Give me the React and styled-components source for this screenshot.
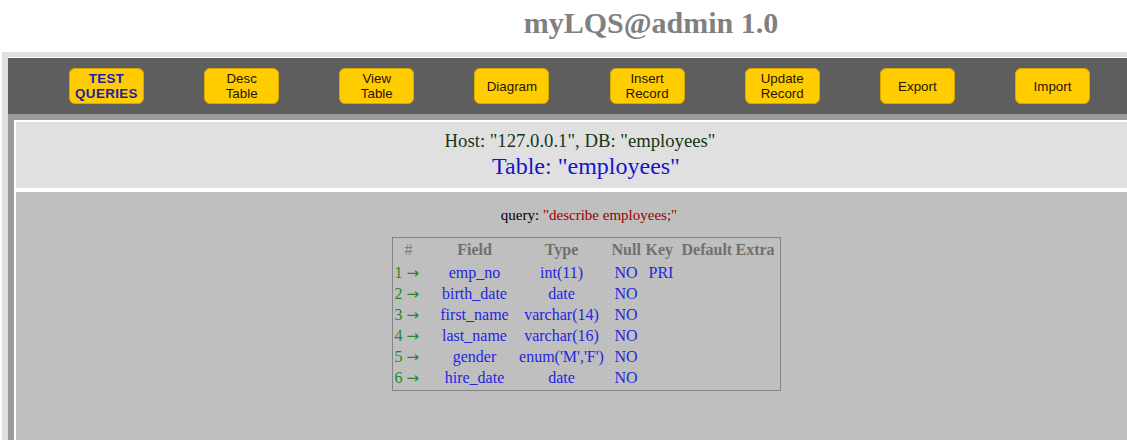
import React from "react";
import styled, { createGlobalStyle } from "styled-components";

const Global = createGlobalStyle`
  html, body { margin: 0; padding: 0; background: #ffffff; overflow: hidden; }
  body { font-family: "Liberation Serif", "Times New Roman", serif; }
  #root { width: 1127px; height: 440px; overflow: hidden; }
`;

const Page = styled.div`
  width: 1302px;
`;

const Header = styled.header`
  height: 52px;
  box-sizing: border-box;
  padding-top: 6px;
  text-align: center;
`;

const Title = styled.h1`
  margin: 0;
  font-family: "Liberation Serif", "Times New Roman", serif;
  font-weight: bold;
  font-size: 30px;
  line-height: 34px;
  color: #808080;
`;

const OuterFrame = styled.div`
  margin-left: 2px;
  padding: 5px 0 0 6px;
  background: #e0e0e0;
`;

const InnerFrame = styled.div`
  border-top: 1px solid #ffffff;
  background: #9a9a9a;
`;

const Toolbar = styled.nav`
  height: 56px;
  box-sizing: border-box;
  background: #5e5e5e;
  display: flex;
  align-items: center;
  gap: 60.15px;
  padding-left: 61px;
`;

const NavButton = styled.button`
  width: 75px;
  height: 36px;
  box-sizing: border-box;
  padding: 0;
  background: #ffcc00;
  border: 1px solid #d9a900;
  border-radius: 6px;
  font-family: "Liberation Sans", Arial, sans-serif;
  font-size: 13.33px;
  line-height: 15px;
  font-weight: ${(p) => (p.$active ? "bold" : "normal")};
  letter-spacing: ${(p) => (p.$active ? "0.4px" : "0")};
  color: ${(p) => (p.$active ? "#1e1eaa" : "#261400")};
  cursor: pointer;
`;

const ContentArea = styled.div`
  padding: 6px 0 0 6px;
`;

const Panel = styled.section`
  border-top: 2px solid #ffffff;
  border-left: 2px solid #ffffff;
  width: 1140px;
`;

const InfoBox = styled.div`
  height: 68px;
  box-sizing: border-box;
  padding-top: 8px;
  background: #e0e0e0;
  border-bottom: 2px solid #ffffff;
  text-align: center;
`;

const HostLine = styled.div`
  font-size: 18.7px;
  line-height: 22px;
  color: #163616;
  padding-right: 12px;
`;

const TableLine = styled.div`
  font-size: 24px;
  line-height: 28px;
  color: #1414cc;
`;

const QueryBox = styled.div`
  border-top: 2px solid #ffffff;
  background: #bfbfbf;
  height: 300px;
  padding-top: 14px;
  box-sizing: border-box;
`;

const QueryLine = styled.div`
  text-align: center;
  font-size: 15px;
  line-height: 18px;
  color: #000000;
  padding-left: 6px;
`;

const QueryText = styled.span`
  color: #990000;
`;

const DescTable = styled.table`
  margin: 13px auto 0;
  border: 1px solid #858585;
  border-collapse: separate;
  border-spacing: 0;
  table-layout: fixed;
  width: 389px;
  padding-bottom: 2px;
  font-size: 16px;
`;

const HeadCell = styled.th`
  height: 24px;
  padding: 0 0 0 ${(p) => p.$pad || 0}px;
  text-align: ${(p) => p.$align};
  font-weight: ${(p) => (p.$plain ? "normal" : "bold")};
  color: ${(p) => (p.$plain ? "#7a7a7a" : "#707070")};
  white-space: nowrap;
  line-height: 24px;
`;

const Cell = styled.td`
  height: 21px;
  padding: 0 0 0 ${(p) => p.$pad || 0}px;
  text-align: ${(p) => p.$align};
  color: ${(p) => (p.$num ? "#238a23" : "#2424e0")};
  white-space: nowrap;
  line-height: 21px;
`;

const Arrow = styled.span`
  font-family: "DejaVu Sans", sans-serif;
  font-size: 15px;
  line-height: 10px;
`;

const columns = [
  { key: "n", label: "#", w: 44, thAlign: "left", thPad: 12, tdAlign: "left", tdPad: 2, plain: true },
  { key: "field", label: "Field", w: 76, thAlign: "center", tdAlign: "center" },
  { key: "type", label: "Type", w: 98, thAlign: "center", tdAlign: "center" },
  { key: "nul", label: "Null", w: 31, thAlign: "left", thPad: 1, tdAlign: "left", tdPad: 4 },
  { key: "k", label: "Key", w: 30, thAlign: "left", thPad: 4, tdAlign: "left", tdPad: 7 },
  { key: "def", label: "Default", w: 64, thAlign: "left", thPad: 10, tdAlign: "left" },
  { key: "extra", label: "Extra", w: 44, thAlign: "left", thPad: 0, tdAlign: "left" },
];

const rows = [
  { field: "emp_no", type: "int(11)", nul: "NO", k: "PRI" },
  { field: "birth_date", type: "date", nul: "NO", k: "" },
  { field: "first_name", type: "varchar(14)", nul: "NO", k: "" },
  { field: "last_name", type: "varchar(16)", nul: "NO", k: "" },
  { field: "gender", type: "enum('M','F')", nul: "NO", k: "" },
  { field: "hire_date", type: "date", nul: "NO", k: "" },
];

const buttons = [
  ["TEST", "QUERIES"],
  ["Desc", "Table"],
  ["View", "Table"],
  ["Diagram"],
  ["Insert", "Record"],
  ["Update", "Record"],
  ["Export"],
  ["Import"],
];

export default function App() {
  return (
    <>
      <Global />
      <Page>
        <Header>
          <Title>myLQS@admin 1.0</Title>
        </Header>
        <OuterFrame>
          <InnerFrame>
            <Toolbar>
              {buttons.map((lines, i) => (
                <NavButton key={i} $active={i === 0}>
                  {lines.map((l, j) => (
                    <React.Fragment key={j}>
                      {j > 0 && <br />}
                      {l}
                    </React.Fragment>
                  ))}
                </NavButton>
              ))}
            </Toolbar>
            <ContentArea>
              <Panel>
                <InfoBox>
                  <HostLine>Host: "127.0.0.1", DB: "employees"</HostLine>
                  <TableLine>Table: "employees"</TableLine>
                </InfoBox>
                <QueryBox>
                  <QueryLine>
                    query: <QueryText>"describe employees;"</QueryText>
                  </QueryLine>
                  <DescTable>
                    <colgroup>
                      {columns.map((c) => (
                        <col key={c.key} style={{ width: c.w }} />
                      ))}
                    </colgroup>
                    <thead>
                      <tr>
                        {columns.map((c) => (
                          <HeadCell key={c.key} $align={c.thAlign} $pad={c.thPad} $plain={c.plain}>
                            {c.label}
                          </HeadCell>
                        ))}
                      </tr>
                    </thead>
                    <tbody>
                      {rows.map((r, i) => (
                        <tr key={i}>
                          {columns.map((c) => (
                            <Cell key={c.key} $align={c.tdAlign} $pad={c.tdPad} $num={c.key === "n"}>
                              {c.key === "n" ? (
                                <>
                                  {i + 1} <Arrow>→</Arrow>
                                </>
                              ) : (
                                r[c.key] || ""
                              )}
                            </Cell>
                          ))}
                        </tr>
                      ))}
                    </tbody>
                  </DescTable>
                </QueryBox>
              </Panel>
            </ContentArea>
          </InnerFrame>
        </OuterFrame>
      </Page>
    </>
  );
}
